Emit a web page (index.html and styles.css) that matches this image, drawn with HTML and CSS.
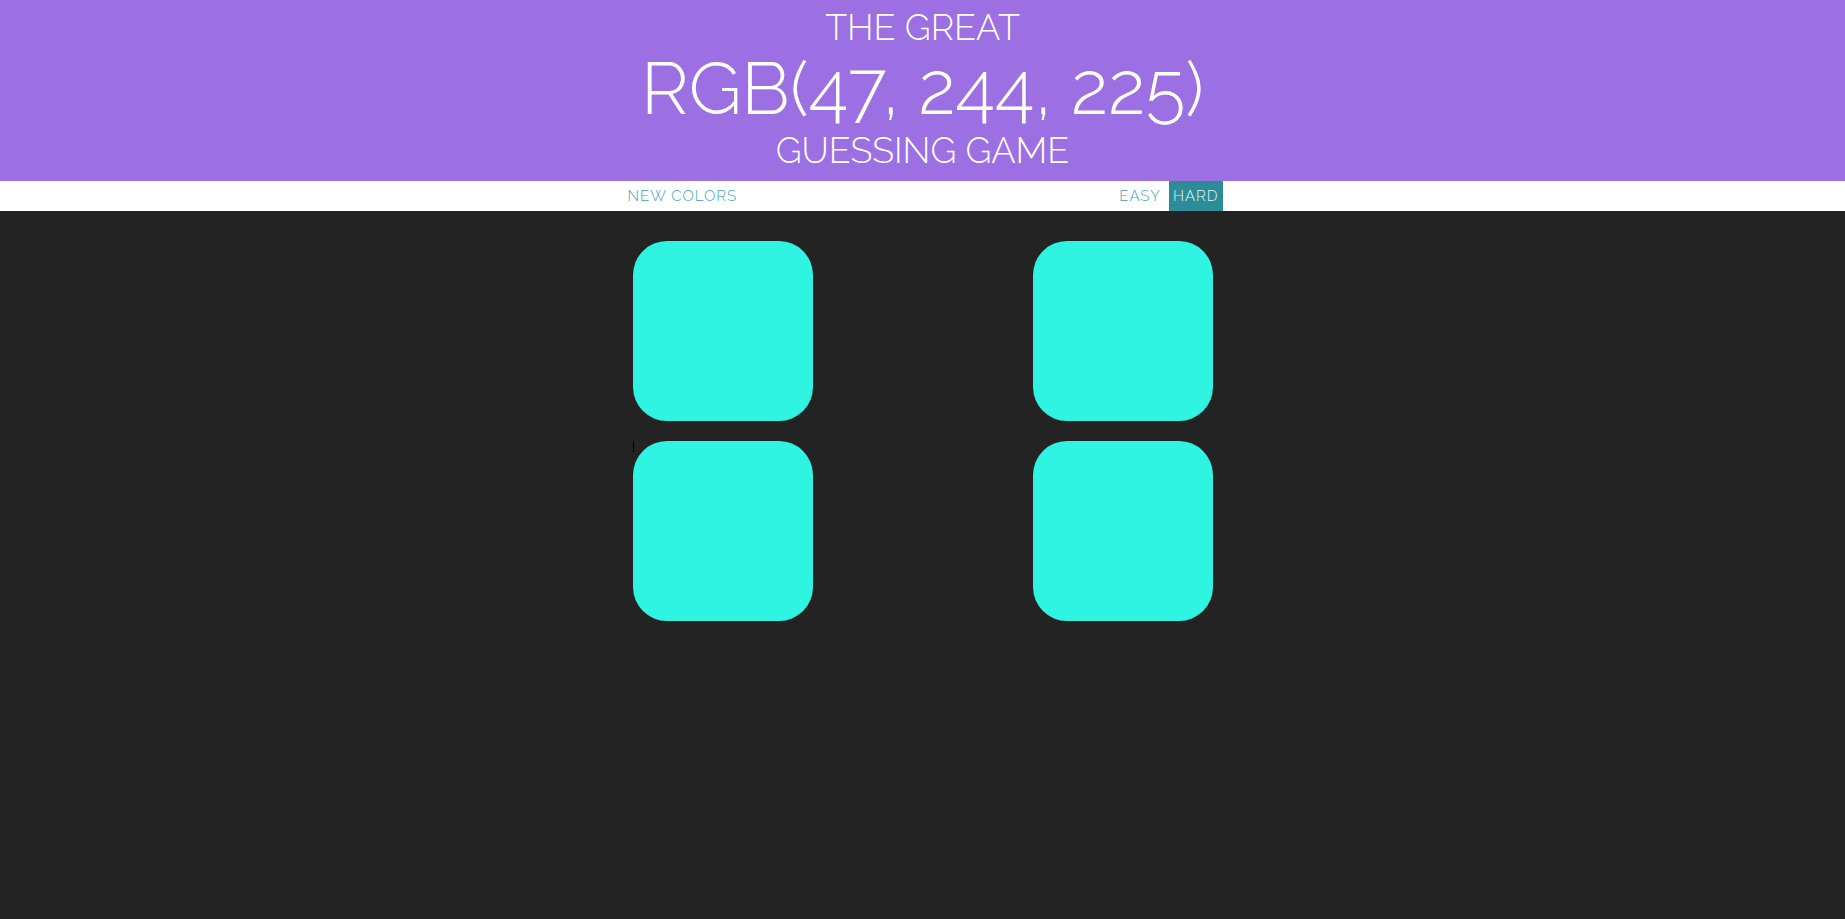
FILE: index.html
```html
<!DOCTYPE html>
<html lang="en">
<head>
<meta charset="utf-8">
<title>Color Game</title>
<link rel="stylesheet" href="styles.css">
</head>
<body>
<h1 class="title">
  <span class="title-line title-top">The Great</span>
  <span class="title-line title-rgb">RGB(47, 244, 225)</span>
  <span class="title-line title-bottom">Guessing Game</span>
</h1>
<div class="stripe">
  <div class="stripe-inner">
    <button class="btn">New Colors</button>
    <span class="message"></span>
    <div class="modes">
      <button class="btn">Easy</button>
      <button class="btn selected">Hard</button>
    </div>
  </div>
</div>
<div class="board">
  <div class="square"></div>
  <div class="square hidden"></div>
  <div class="square"></div>
  <div class="square"></div>
  <div class="square hidden"></div>
  <div class="square"></div>
  <span class="caret"></span>
</div>
</body>
</html>
```

FILE: styles.css
```css
html, body {
  margin: 0;
  padding: 0;
}

body {
  background: #232323;
  font-family: Raleway, Lato, "Open Sans", sans-serif;
}

.title {
  margin: 0;
  padding: 7px 0 9px;
  background: #9c6fe3;
  color: #ffffff;
  text-align: center;
  text-transform: uppercase;
  font-weight: 300;
}

.title-line {
  display: block;
  white-space: nowrap;
}

.title-top {
  font-size: 36px;
  line-height: 41px;
}

.title-rgb {
  font-size: 73.5px;
  line-height: 80px;
}

.title-bottom {
  font-size: 36px;
  line-height: 44px;
}

.stripe {
  background: #ffffff;
  height: 30px;
}

.stripe-inner {
  width: 600px;
  height: 30px;
  margin: 0 auto;
  display: flex;
  justify-content: space-between;
  align-items: stretch;
}

.modes {
  display: flex;
  gap: 3px;
}

.btn {
  border: none;
  background: none;
  margin: 0;
  padding: 0 5px;
  height: 30px;
  line-height: 30px;
  font-family: Raleway, Lato, "Open Sans", sans-serif;
  font-size: 15px;
  font-weight: 300;
  letter-spacing: 1px;
  text-transform: uppercase;
  color: #3aa5b8;
  cursor: pointer;
}

.btn.selected {
  padding: 0 4px;
  background: #2c8d99;
  color: #e8f6f8;
}

.board {
  position: relative;
  width: 600px;
  margin: 20px auto;
  padding: 10px;
  box-sizing: border-box;
  display: grid;
  grid-template-columns: repeat(3, 180px);
  grid-auto-rows: 180px;
  column-gap: 20px;
  row-gap: 20px;
}

.square {
  background: rgb(47, 244, 225);
  border-radius: 34px;
}

.square.hidden {
  background: #232323;
}

.caret {
  position: absolute;
  left: 10px;
  top: 210px;
  width: 1px;
  height: 11px;
  background: #000000;
}
```
